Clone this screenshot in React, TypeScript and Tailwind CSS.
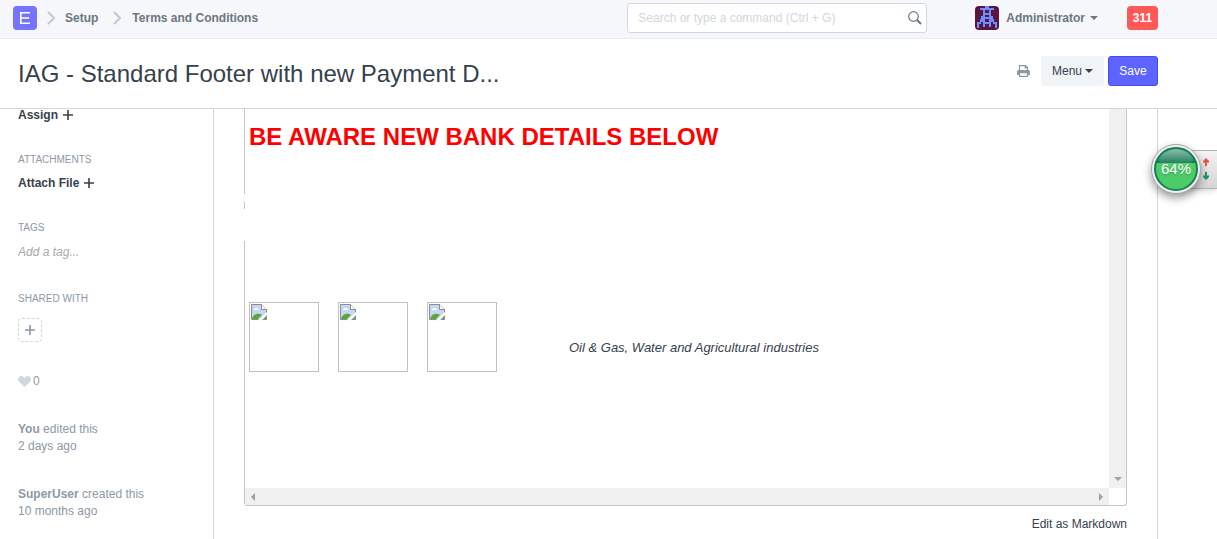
import React from "react";

const Chevron = () => (
  <svg width="9" height="14" viewBox="0 0 9 14" fill="none" stroke="#c0c9d2" strokeWidth="2">
    <path d="M1 1l6 6-6 6" />
  </svg>
);

const Caret = () => (
  <svg width="8" height="4" viewBox="0 0 8 4" fill="currentColor">
    <path d="M0 0h8L4 4z" />
  </svg>
);

const Plus = () => (
  <svg width="10" height="10" viewBox="0 0 10 10" fill="none" stroke="currentColor" strokeWidth="1.6">
    <path d="M5 0v10M0 5h10" />
  </svg>
);

const Avatar = () => (
  <svg width="24" height="24" viewBox="0 0 24 24" className="rounded" role="img" aria-label="Avatar">
    <rect width="24" height="24" fill="#5a1640" />
    <g fill="#6c8fff">
      <path d="M10 0h4v2h-4zM5 2h14v2H5z" />
      <path d="M8 4h2v12H8zM14 4h2v12h-2z" />
      <path d="M10 7h4v2h-4zM10 11h4v2h-4zM6 10h2v3H6zM16 10h2v3h-2z" />
      <path d="M5 13h5v3H5zM14 13h5v3h-5zM2 16h4v2H2zM18 16h4v2h-4z" />
      <path d="M2 18h2v4H2zM20 18h2v4h-2zM8 16h8v2H8zM8 18h2v3H8zM14 18h2v3h-2z" />
    </g>
  </svg>
);

const BrokenImage = () => (
  <div className="size-[70px] border border-[#c0c0c0] p-px" role="img" aria-label="Missing image">
    <svg width="16" height="16" viewBox="0 0 16 16">
      <path d="M.5.5h10l5 5v10H.5z" fill="#c6d6f7" />
      <path d="M3 6V5h1V4h3v1h1v1z" fill="#fff" />
      <path d="M1 15c1-4 4-6 8-5l2 1-4 4zM12 15l3-3v3z" fill="#56ab35" />
      <path d="M.5.5h10l5 5v10H.5zM10.5.5v5h5" fill="none" stroke="#8c8c8c" />
      <path d="M11 1v4h4z" fill="#fff" />
      <path d="M16 8v3l-5 5H7z" fill="#fff" />
    </svg>
  </div>
);

const Navbar = () => (
  <header className="flex h-[39px] items-start border-b border-[#e6ecf1] bg-[#f5f7fa] pl-[13px] pr-[59px] text-xs font-bold text-[#6c7680]">
    <nav className="flex flex-1 items-center pt-[5px]" aria-label="Breadcrumb">
      <a href="#home" className="flex size-6 items-center justify-center rounded bg-[#7574ff]" aria-label="Home">
        <svg width="10" height="12" viewBox="0 0 10 12" fill="none" stroke="#fff" strokeWidth="1.6">
          <path d="M10 .8H.8v10.400H10M.8 6h8.400" />
        </svg>
      </a>
      <span className="ml-[10px] mr-[9px]"><Chevron /></span>
      <a href="#setup" className="leading-[26px]">Setup</a>
      <span className="ml-[15px] mr-[10px]"><Chevron /></span>
      <a href="#terms" className="leading-[26px]">Terms and Conditions</a>
    </nav>
    <label className="mt-[3px] flex h-[30px] w-[300px] items-center rounded-[3px] border border-[#d1d8dd] bg-white pl-[10px] pr-1">
      <input
        type="text"
        aria-label="Search"
        placeholder="Search or type a command (Ctrl + G)"
        className="min-w-0 flex-1 font-normal outline-none placeholder:text-[#d1d8dd]"
      />
      <svg width="14" height="14" viewBox="0 0 14 14" fill="none" stroke="#6c7680">
        <circle cx="5.500" cy="5.500" r="4.800" strokeWidth="1.200" />
        <path d="M9 9l4 4" strokeWidth="2" />
      </svg>
    </label>
    <button className="ml-12 mt-[6px] flex h-6 items-center">
      <Avatar />
      <span className="ml-[7px] mr-[5px]">Administrator</span>
      <Caret />
    </button>
    <button className="ml-[29px] mt-[6px] h-6 w-[31px] rounded bg-[#ff5858] text-white">311</button>
  </header>
);

const PageHead = () => (
  <div className="flex h-[70px] items-start border-b border-[#d1d8dd] bg-white pl-[18px] pr-[59px] pt-[17px]">
    <h1 className="mt-[2px] min-w-0 flex-1 truncate text-2xl text-[#36414c]">
      IAG - Standard Footer with new Payment D...
    </h1>
    <button className="mr-[11px] flex h-[30px] items-center text-[#8d99a6]" aria-label="Print">
      <svg width="13" height="12" viewBox="0 0 13 12" fill="none" stroke="currentColor" strokeWidth="1.200">
        <path d="M2.500 6V.6h6l2 2V6M8.300.6v2.200h2.200" />
        <path d="M0 10V6.500Q0 5 1.500 5h10Q13 5 13 6.500V10h-2V8H2v2z" fill="currentColor" stroke="none" />
        <path d="M2.500 7.600v3.800h8V7.600z" fill="#fff" />
      </svg>
    </button>
    <button className="mr-1 flex h-[30px] w-[63px] items-center justify-center gap-[3px] rounded-[3px] bg-[#f0f4f7] text-xs text-[#36414c]">
      Menu <Caret />
    </button>
    <button className="h-[30px] w-[50px] rounded-[3px] border border-[#444bff] bg-[#5e64ff] text-xs text-white">
      Save
    </button>
  </div>
);

const Sidebar = () => (
  <aside className="w-[214px] shrink-0 border-r border-[#d1d8dd] pl-[18px] text-xs leading-4 text-[#8d99a6]">
    <button className="flex items-center gap-[5px] font-bold leading-3 text-[#36414c]">Assign <Plus /></button>
    <h2 className="mt-[31px] text-[10px] leading-4">ATTACHMENTS</h2>
    <button className="mt-[7px] flex items-center gap-[5px] font-bold text-[#36414c]">Attach File <Plus /></button>
    <h2 className="mt-[29px] text-[10px] leading-4">TAGS</h2>
    <input
      type="text"
      aria-label="Add a tag"
      placeholder="Add a tag..."
      className="mt-2 block h-4 w-40 italic outline-none placeholder:text-[#a9a9a9]"
    />
    <h2 className="mt-[31px] text-[10px] leading-4">SHARED WITH</h2>
    <button
      className="mt-[11px] flex size-6 items-center justify-center rounded border border-dashed border-[#d1d8dd]"
      aria-label="Share"
    >
      <Plus />
    </button>
    <button className="mt-[31px] flex items-center gap-[2px]">
      <svg width="13" height="11" viewBox="0 0 13 11" fill="#d1d8dd">
        <path d="M6.500 11L1 5.700C-1 3 .5 0 3.300 0 5 0 6 1 6.500 2 7 1 8 0 9.700 0 12.500 0 14 3 12 5.700z" />
      </svg>
      0
    </button>
    <p className="mt-8 leading-[17px]"><b>You</b> edited this<br />2 days ago</p>
    <p className="mt-[31px] leading-[17px]"><b>SuperUser</b> created this<br />10 months ago</p>
  </aside>
);

const Editor = () => (
  <section className="overflow-hidden rounded-b-[3px] border-b border-r border-[#c6c6c6]">
    <div className="flex">
      <div className="flex-1 text-[13px] text-[#36414c]">
        <div className="h-[85px] border-l border-[#c6c6c6] pl-1 pt-3">
          <h2 className="text-2xl font-bold text-[#f00]">BE AWARE NEW BANK DETAILS BELOW</h2>
        </div>
        <div className="mt-2 h-[7px] border-l border-[#c6c6c6]" />
        <div className="mt-8 flex h-[247px] border-l border-[#c6c6c6] pl-1 pt-[61px]">
          <div className="flex gap-[19px]">
            <BrokenImage />
            <BrokenImage />
            <BrokenImage />
          </div>
          <p className="ml-[72px] mt-9 italic leading-5">Oil &amp; Gas, Water and Agricultural industries</p>
        </div>
      </div>
      <div className="flex w-[17px] items-end justify-center bg-[#f0f0f0] pb-[7px] text-[#a0a0a0]"><Caret /></div>
    </div>
    <div className="flex border-l border-[#c6c6c6]">
      <div className="flex h-[17px] flex-1 items-center justify-between bg-[#f0f0f0] px-[6px] text-[#a0a0a0]">
        <svg width="4" height="8" viewBox="0 0 4 8" fill="currentColor"><path d="M4 0v8L0 4z" /></svg>
        <svg width="4" height="8" viewBox="0 0 4 8" fill="currentColor"><path d="M0 0v8l4-4z" /></svg>
      </div>
      <div className="w-[17px]" />
    </div>
  </section>
);

const SpeedWidget = () => (
  <div className="absolute right-0 top-36 flex w-[66px] items-center">
    <div className="absolute right-0 h-[39px] w-10 border-y border-[#b4b4b4] bg-linear-to-b from-[#f4f4f4] to-[#d4d4d4] shadow-md" />
    <div className="relative flex size-[50px] shrink-0 items-center justify-center rounded-full border border-[#a5a5a5] bg-[#f0f0f0] p-[2px] shadow-[0_4px_8px_rgba(0,0,0,0.4)]">
      <div className="relative flex size-full items-center justify-center overflow-hidden rounded-full border-2 border-[#148055] bg-linear-to-b from-[#177a56] from-35% to-[#4ccb68] to-35% text-[15px] text-white">
        <span className="absolute top-0 h-4 w-9 rounded-full bg-linear-to-b from-white/50 to-transparent" />
        <span className="relative text-shadow-sm">64%</span>
      </div>
    </div>
    <svg className="relative ml-px" width="8" height="22" viewBox="0 0 8 22">
      <path d="M4 0l3 3v1.500H5V8H3V4.500H1V3z" fill="#e5533d" />
      <path d="M4 22l3-3v-1.500H5V14H3v3.500H1V19z" fill="#1f8f58" />
    </svg>
  </div>
);

const App: React.FC = () => {
  return (
    <div className="relative flex min-h-screen flex-col bg-white font-['Liberation_Sans',Arial,sans-serif]">
      <Navbar />
      <PageHead />
      <div className="flex flex-1 pr-[59px]">
        <Sidebar />
        <main className="min-w-0 flex-1 border-r border-[#d1d8dd] px-[30px]">
          <Editor />
          <a href="#markdown" className="mt-[10px] block text-right text-xs leading-4 text-[#36414c]">
            Edit as Markdown
          </a>
        </main>
      </div>
      <SpeedWidget />
    </div>
  );
};

export default App;
